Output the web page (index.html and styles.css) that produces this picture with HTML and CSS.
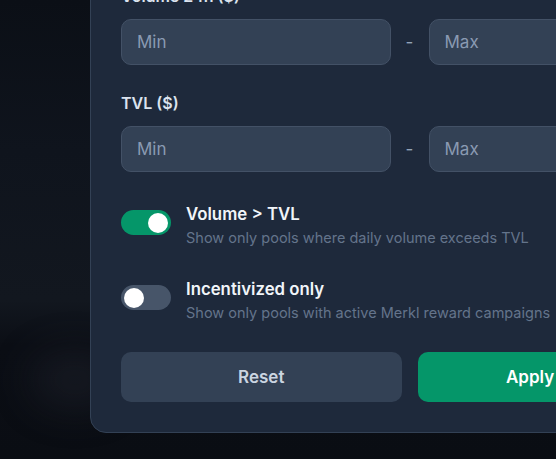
FILE: index.html
```html
<!DOCTYPE html>
<html lang="en">
<head>
<meta charset="utf-8">
<title>Filters</title>
<link rel="stylesheet" href="styles.css">
</head>
<body>
<div class="backdrop">
  <div class="glow"></div>
  <section class="panel">
    <div class="field">
      <label class="label">Volume 24h ($)</label>
      <div class="range">
        <input class="input" type="text" placeholder="Min">
        <span class="dash">-</span>
        <input class="input" type="text" placeholder="Max">
      </div>
    </div>
    <div class="field">
      <label class="label">TVL ($)</label>
      <div class="range">
        <input class="input" type="text" placeholder="Min">
        <span class="dash">-</span>
        <input class="input" type="text" placeholder="Max">
      </div>
    </div>
    <div class="toggles">
      <div class="toggle-row">
        <span class="switch on"><span class="knob"></span></span>
        <div class="toggle-text">
          <div class="toggle-title">Volume &gt; TVL</div>
          <div class="toggle-desc">Show only pools where daily volume exceeds TVL</div>
        </div>
      </div>
      <div class="toggle-row">
        <span class="switch"><span class="knob"></span></span>
        <div class="toggle-text">
          <div class="toggle-title">Incentivized only</div>
          <div class="toggle-desc">Show only pools with active Merkl reward campaigns</div>
        </div>
      </div>
    </div>
    <div class="actions">
      <button class="btn btn-reset">Reset</button>
      <button class="btn btn-apply">Apply Filters</button>
    </div>
  </section>
</div>
</body>
</html>
```

FILE: styles.css
```css
* { box-sizing: border-box; }
html, body {
  margin: 0;
  padding: 0;
  height: 100%;
  overflow: hidden;
}
body {
  font-family: Inter, "Noto Sans", "Liberation Sans", sans-serif;
  background: linear-gradient(180deg, #0b0f16 0px, #0f141d 150px, #12171f 300px, #0b0e15 345px, #0a0d13 100%);
}
.backdrop {
  position: relative;
  width: 556px;
  height: 459px;
  overflow: hidden;
}
.glow {
  position: absolute;
  left: 30px;
  top: 350px;
  width: 90px;
  height: 60px;
  border-radius: 50%;
  background: rgba(40, 44, 54, 0.35);
  filter: blur(18px);
}
.panel {
  position: relative;
  margin: -45px 0 0 90px;
  width: 639px;
  background: #1e293b;
  border: 1px solid #334155;
  border-radius: 16px;
  padding: 30px;
  display: flex;
  flex-direction: column;
}
.field + .field { margin-top: 28px; }
.label {
  display: block;
  font-size: 16px;
  line-height: 20px;
  font-weight: 600;
  color: #dbe3ee;
  margin-bottom: 13px;
}
.range {
  display: grid;
  grid-template-columns: 1fr 38px 1fr;
  align-items: center;
}
.input {
  height: 46px;
  width: 100%;
  background: #334155;
  border: 1px solid #435166;
  border-radius: 10px;
  padding: 0 15px;
  font-family: inherit;
  font-size: 17px;
  color: #e2e8f0;
  outline: none;
}
.input::placeholder { color: #8a9ab2; }
.dash {
  text-align: center;
  color: #94a3b8;
  font-size: 17px;
  line-height: 1;
}
.toggles {
  margin-top: 30px;
  display: flex;
  flex-direction: column;
  gap: 29px;
}
.toggle-row {
  display: flex;
  align-items: flex-start;
  gap: 15px;
}
.switch {
  flex: none;
  position: relative;
  width: 50px;
  height: 25px;
  margin-top: 8px;
  border-radius: 13px;
  background: #475569;
}
.switch.on { background: #059669; }
.knob {
  position: absolute;
  top: 2.5px;
  left: 3px;
  width: 20px;
  height: 20px;
  border-radius: 50%;
  background: #ffffff;
}
.switch.on .knob { left: 27px; }
.toggle-title {
  font-size: 16.8px;
  line-height: 24px;
  font-weight: 600;
  color: #f1f5f9;
  white-space: nowrap;
}
.toggle-desc {
  margin-top: 2px;
  font-size: 14.5px;
  line-height: 20px;
  color: #64748b;
  white-space: nowrap;
}
.actions {
  margin-top: 29px;
  display: flex;
  gap: 16px;
}
.btn {
  flex: 1;
  height: 50px;
  border: none;
  border-radius: 10px;
  font-family: inherit;
  font-size: 17px;
  font-weight: 600;
  cursor: pointer;
}
.btn-reset { background: #334155; color: #cbd5e1; }
.btn-apply { background: #059669; color: #ffffff; }
```
